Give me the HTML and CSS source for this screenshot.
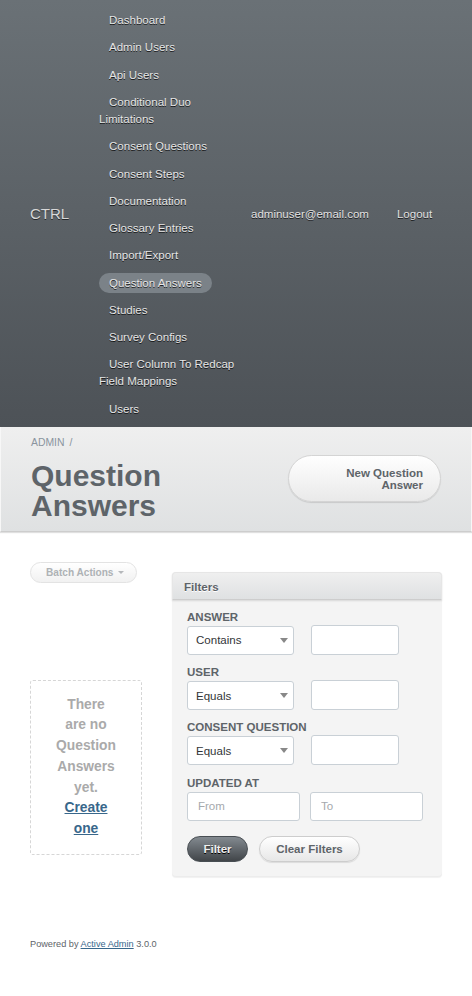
FILE: index.html
```html
<!DOCTYPE html>
<html lang="en">
<head>
<meta charset="utf-8">
<title>Question Answers | CTRL</title>
<link rel="stylesheet" href="styles.css">
</head>
<body>
<div class="header">
  <h1 class="site-title">CTRL</h1>
  <ul class="tabs">
    <li><a href="#">Dashboard</a></li>
    <li><a href="#">Admin Users</a></li>
    <li><a href="#">Api Users</a></li>
    <li><a href="#">Conditional Duo Limitations</a></li>
    <li><a href="#">Consent Questions</a></li>
    <li><a href="#">Consent Steps</a></li>
    <li><a href="#">Documentation</a></li>
    <li><a href="#">Glossary Entries</a></li>
    <li><a href="#">Import/Export</a></li>
    <li class="current"><a href="#">Question Answers</a></li>
    <li><a href="#">Studies</a></li>
    <li><a href="#">Survey Configs</a></li>
    <li><a href="#">User Column To Redcap Field Mappings</a></li>
    <li><a href="#">Users</a></li>
  </ul>
  <ul class="utility-nav">
    <li><a href="#">adminuser@email.com</a></li>
    <li><a href="#">Logout</a></li>
  </ul>
</div>

<div class="title-bar">
  <div class="title-left">
    <div class="breadcrumb">ADMIN <span class="sep">/</span></div>
    <h2 class="page-title">Question Answers</h2>
  </div>
  <a href="#" class="action-btn">New Question Answer</a>
</div>

<div class="main">
  <div class="content">
    <div class="batch-btn"><span>Batch Actions</span><span class="caret"></span></div>
    <div class="blank-slate">There are no Question Answers yet. <a href="#">Create one</a></div>
  </div>
  <div class="sidebar">
    <div class="panel">
      <h3 class="panel-title">Filters</h3>
      <div class="panel-body">
        <div class="filter-row">
          <label class="filter-label">Answer</label>
          <div class="controls">
            <span class="select-wrap"><select><option>Contains</option></select></span>
            <input class="search-input" type="text">
          </div>
        </div>
        <div class="filter-row">
          <label class="filter-label">User</label>
          <div class="controls">
            <span class="select-wrap"><select><option>Equals</option></select></span>
            <input class="search-input" type="text">
          </div>
        </div>
        <div class="filter-row">
          <label class="filter-label">Consent Question</label>
          <div class="controls">
            <span class="select-wrap"><select><option>Equals</option></select></span>
            <input class="search-input" type="text">
          </div>
        </div>
        <div class="filter-row last">
          <label class="filter-label">Updated At</label>
          <div class="controls date">
            <input class="date-input" type="text" placeholder="From">
            <input class="date-input" type="text" placeholder="To">
          </div>
        </div>
        <div class="buttons">
          <button class="btn-dark">Filter</button>
          <button class="btn-light">Clear Filters</button>
        </div>
      </div>
    </div>
  </div>
</div>

<div class="footer">Powered by <a href="#">Active Admin</a> 3.0.0</div>
</body>
</html>
```

FILE: styles.css
```css
html, body {
  margin: 0;
  padding: 0;
  background: #fff;
}
body {
  font-family: "Liberation Sans", Arial, Helvetica, sans-serif;
  font-size: 11.52px;
  color: #323537;
}

/* Header */
.header {
  display: flex;
  align-items: center;
  padding: 0 30px;
  background: linear-gradient(180deg, #6a7176 0%, #4d5257 100%);
}
.site-title {
  flex: 0 0 69px;
  margin: 0;
  padding-top: 2px;
  font-size: 15px;
  font-weight: normal;
  color: #d8d8d8;
  text-shadow: rgba(0,0,0,0.6) 0 1px 0;
  line-height: 18px;
}
.tabs {
  flex: 0 0 142px;
  list-style: none;
  margin: 0;
  padding: 7.35px 0 3.45px;
}
.tabs li {
  padding: 5.15px 0;
  line-height: 17px;
}
.tabs a {
  padding: 4.4px 10px;
  color: #e6e6e6;
  text-decoration: none;
  text-shadow: rgba(0,0,0,0.75) 0 1px 0;
  border-radius: 10px;
}
.tabs li.current a {
  background: #7b8288;
}
.utility-nav {
  list-style: none;
  margin: 0;
  padding: 2px 0 0;
  display: flex;
  gap: 8px;
}
.utility-nav a {
  display: block;
  padding: 0 10px;
  line-height: 17px;
  color: #e2e2e2;
  text-decoration: none;
  text-shadow: rgba(0,0,0,0.75) 0 1px 0;
}

/* Title bar */
.title-bar {
  display: flex;
  align-items: center;
  justify-content: space-between;
  gap: 20px;
  padding: 9px 30px 10px 30px;
  background: linear-gradient(180deg, #efefef 0%, #dfe1e2 100%);
  border-left: 1px solid #f7f7f7;
  border-right: 1px solid #f7f7f7;
  border-bottom: 1px solid #cdcdcd;
  box-shadow: 0 1px 1px rgba(0,0,0,0.12);
}
.title-left {
  flex: 1;
  min-width: 0;
}
.breadcrumb {
  font-size: 10.4px;
  line-height: 14px;
  color: #8a949e;
}
.breadcrumb .sep {
  margin-left: 2px;
}
.page-title {
  margin: 11px 0 0;
  font-size: 30px;
  line-height: 30px;
  font-weight: bold;
  color: #5e6469;
}
.action-btn {
  flex: 0 0 153px;
  box-sizing: border-box;
  width: 153px;
  padding: 11px 17px 10px 18px;
  text-align: right;
  font-weight: bold;
  line-height: 12px;
  color: #5e6469;
  text-decoration: none;
  background: linear-gradient(180deg, #ffffff 0%, #e9e9e9 100%);
  border: 1px solid #d4d4d4;
  border-radius: 200px;
  box-shadow: 0 1px 1px rgba(0,0,0,0.12);
}

/* Main */
.main {
  display: flex;
  align-items: flex-start;
  gap: 30px;
  padding: 30px;
}
.content {
  flex: 1;
  min-width: 0;
}
.batch-btn {
  display: flex;
  align-items: center;
  box-sizing: border-box;
  width: 107px;
  height: 21px;
  padding: 0 10px 0 15px;
  font-size: 10.1px;
  font-weight: bold;
  color: #aeb2b5;
  background: linear-gradient(180deg, #ffffff 0%, #f1f1f1 100%);
  border: 1px solid #e3e3e3;
  border-radius: 200px;
}
.caret {
  display: inline-block;
  margin-left: 4px;
  margin-top: 1px;
  border-left: 3px solid transparent;
  border-right: 3px solid transparent;
  border-top: 3px solid #b5b8bb;
}
.blank-slate {
  margin-top: 97px;
  padding: 14px 24px;
  border: 1px dashed #d6d6d6;
  border-radius: 3px;
  text-align: center;
  font-size: 13.8px;
  line-height: 20.7px;
  font-weight: bold;
  color: #aaaaaa;
}
.blank-slate a {
  color: #38678b;
  text-decoration: underline;
}

/* Sidebar */
.sidebar {
  flex: 0 0 270px;
  margin-top: 10px;
}
.panel {
  background: #f4f4f4;
  border-radius: 4px;
  box-shadow: 0 1px 1px rgba(0,0,0,0.06), inset 0 -1px 0 #ececec;
}
.panel-title {
  margin: 0;
  box-sizing: border-box;
  height: 28px;
  padding: 1px 11px 0;
  line-height: 27px;
  font-size: 11.52px;
  font-weight: bold;
  color: #5e6469;
  text-shadow: #fff 0 1px 0;
  background: linear-gradient(180deg, #efefef 0%, #dfe1e2 100%);
  border: 1px solid #e6e6e6;
  border-bottom: 1px solid #cdcdcd;
  border-radius: 4px 4px 0 0;
  box-shadow: 0 1px 2px rgba(0,0,0,0.12);
}
.panel-body {
  padding: 10px 15px 15px;
}
.filter-row {
  margin-bottom: 10.3px;
}
.filter-row.last {
  margin-bottom: 15px;
}
.filter-label {
  display: block;
  margin-bottom: 2px;
  line-height: 14px;
  font-weight: bold;
  text-transform: uppercase;
  color: #5e6469;
}
.controls {
  display: flex;
  align-items: flex-start;
  gap: 17px;
}
.controls.date {
  gap: 10px;
}
.select-wrap {
  position: relative;
  display: block;
  flex: 0 0 107px;
  width: 107px;
  height: 29px;
}
.select-wrap select {
  -webkit-appearance: none;
  appearance: none;
  display: block;
  box-sizing: border-box;
  width: 107px;
  height: 29px;
  margin: 0;
  padding: 0 8px;
  font-family: "Liberation Sans", Arial, sans-serif;
  font-size: 11.52px;
  color: #323537;
  background: #fff;
  border: 1px solid #c9d0d6;
  border-radius: 3px;
}
.select-wrap::after {
  content: "";
  position: absolute;
  right: 6px;
  top: 12px;
  border-left: 4px solid transparent;
  border-right: 4px solid transparent;
  border-top: 5px solid #888;
  pointer-events: none;
}
.search-input {
  box-sizing: border-box;
  width: 88px;
  height: 30px;
  margin: -1px 0 0;
  background: #fff;
  border: 1px solid #c9d0d6;
  border-radius: 3px;
}
.date-input {
  box-sizing: border-box;
  width: 113px;
  height: 29px;
  margin: 0;
  padding: 0 10px;
  font-family: "Liberation Sans", Arial, sans-serif;
  font-size: 11.52px;
  background: #fff;
  border: 1px solid #c9d0d6;
  border-radius: 3px;
}
.date-input::placeholder {
  color: #a5a9ad;
}
.buttons {
  display: flex;
  gap: 11px;
}
.buttons button {
  box-sizing: border-box;
  height: 26px;
  padding: 0 15px;
  font-family: "Liberation Sans", Arial, sans-serif;
  font-size: 11.52px;
  font-weight: bold;
  border-radius: 200px;
  cursor: pointer;
}
.btn-dark {
  width: 61px;
  color: #efefef;
  text-shadow: #000 0 1px 0;
  background: linear-gradient(180deg, #838a90 0%, #414549 100%);
  border: 1px solid #484e53;
}
.btn-light {
  width: 101px;
  color: #5e6469;
  background: linear-gradient(180deg, #ffffff 0%, #e7e7e7 100%);
  border: 1px solid #cdcdcd;
  box-shadow: 0 1px 1px rgba(0,0,0,0.1);
}

/* Footer */
.footer {
  padding: 30px;
  font-size: 9.2px;
  line-height: 14px;
  color: #5e6469;
}
.footer a {
  color: #38678b;
  text-decoration: underline;
}
```
